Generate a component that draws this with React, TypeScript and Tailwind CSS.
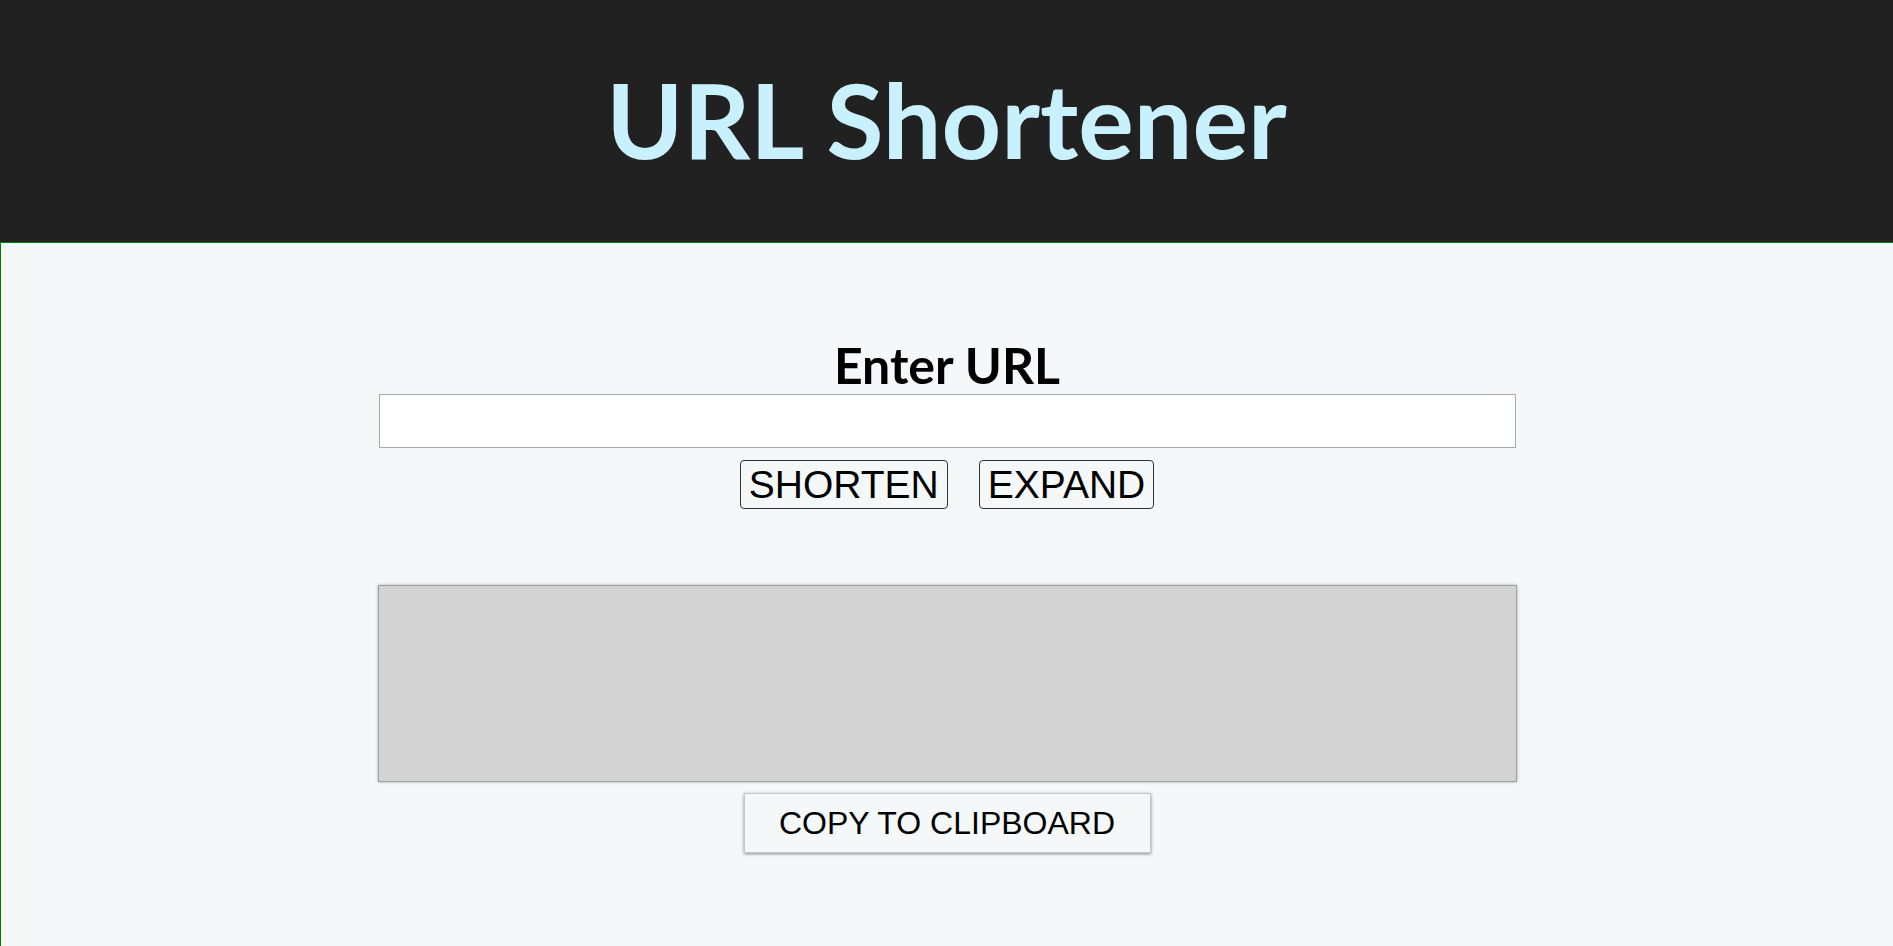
import React, { useState } from "react";

export default function App() {
  const [url, setUrl] = useState("");
  const [result, setResult] = useState("");

  return (
    <div className="min-h-screen bg-[#f4f8f9] font-['Liberation_Sans',Arial,sans-serif]">
      <header className="h-[242px] bg-[#212121] flex items-center justify-center">
        <h1 className="text-[104px] leading-none font-bold text-[#c9f1fd] font-['Lato',sans-serif] pb-[4px]">
          URL Shortener
        </h1>
      </header>

      <main className="border-l border-t border-[#008000] min-h-[704px] flex flex-col items-center pt-[97px]">
        <h2 className="text-[50px] leading-[50px] font-bold text-black font-['Lato',sans-serif]">
          Enter URL
        </h2>
        <input
          type="text"
          value={url}
          onChange={(e) => setUrl(e.target.value)}
          className="mt-[4px] w-[1137px] h-[54px] bg-white border border-[#a9a9a9] px-2 text-[20px] outline-none"
        />
        <div className="mt-[12px] flex gap-[31px]">
          <button
            onClick={() => setResult(url)}
            className="h-[49px] px-2 border border-[#333] rounded-[4px] text-[39px] leading-none text-black"
          >
            SHORTEN
          </button>
          <button
            onClick={() => setResult(url)}
            className="h-[49px] px-2 border border-[#333] rounded-[4px] text-[39px] leading-none text-black"
          >
            EXPAND
          </button>
        </div>

        <textarea
          readOnly
          value={result}
          className="mt-[76px] w-[1139px] h-[197px] bg-[#d3d3d3] border border-[#a0a0a0] shadow-[0_0_3px_rgba(0,0,0,0.3)] resize-none outline-none p-2"
        />

        <button
          onClick={() => navigator.clipboard?.writeText(result)}
          className="mt-[11px] w-[407px] h-[60px] border border-[#c8c8c8] bg-[#f4f8f9] shadow-[0_1px_3px_rgba(0,0,0,0.45)] text-[32px] leading-none text-black"
        >
          COPY TO CLIPBOARD
        </button>
      </main>
    </div>
  );
}
